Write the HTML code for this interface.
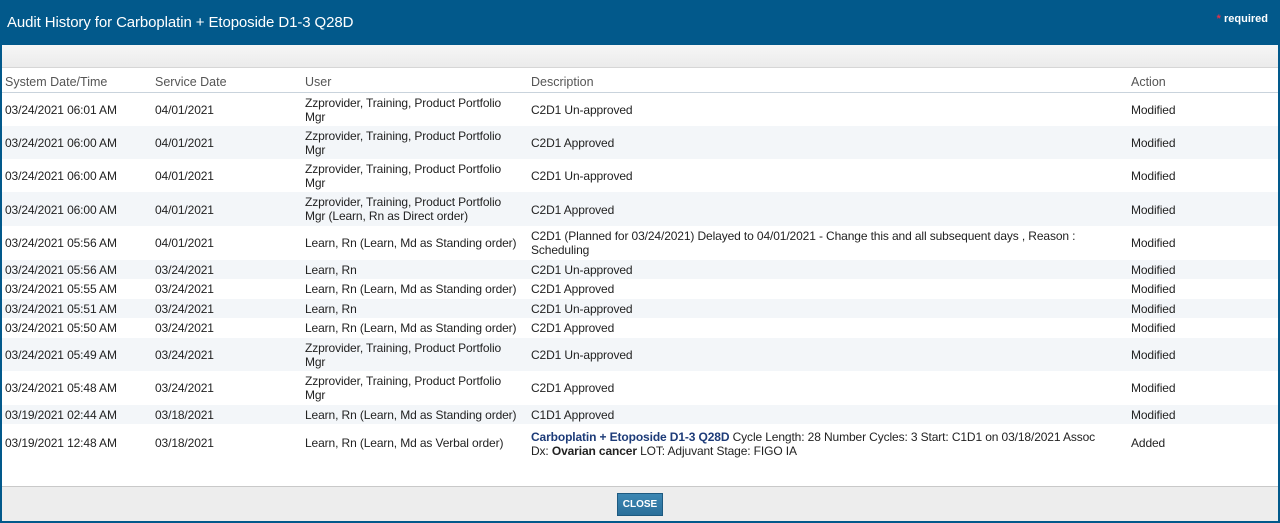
<!DOCTYPE html>
<html><head><style>
*{margin:0;padding:0;box-sizing:border-box}
body{width:1280px;height:523px;background:#fff;font-family:"Liberation Sans",Arial,sans-serif;font-size:12px;color:#222;position:relative;overflow:hidden}
.hdr{position:absolute;left:0;top:0;width:1280px;height:45px;background:#02598b;color:#fff}
.hdr .t{position:absolute;left:7px;top:14px;font-size:15px;letter-spacing:-0.1px}
.hdr .r{position:absolute;right:12px;top:13px;font-size:11px;font-weight:bold}
.hdr .r span{color:#e0304a}
.frame{position:absolute;left:0;top:45px;width:1280px;height:478px;border-left:2px solid #02598b;border-right:2px solid #02598b;border-bottom:2px solid #02598b}
.band{position:absolute;left:2px;top:45px;width:1276px;height:23px;background:linear-gradient(#f6f6f6,#ebebeb);border-bottom:1px solid #d6d6d6}
.th{position:absolute;top:69px;left:2px;width:1276px;height:24px;border-bottom:1px solid #c9d3dc;color:#555;font-size:12.5px}
.row{position:absolute;left:2px;width:1276px;letter-spacing:-0.12px}
.row.a{background:#f3f6f9}
.c{position:absolute;line-height:14px}
.foot{position:absolute;left:2px;top:486px;width:1276px;height:35px;background:#ededed;border-top:1px solid #c9c9c9}
.btn{position:absolute;left:617px;top:493px;width:46px;height:23px;background:linear-gradient(#3c87b3,#2a6f9a);border:1px solid #1e5a80;color:#fff;font-size:10px;font-weight:bold;text-align:center;line-height:21px}
b.n{color:#1d3b78}
</style></head><body>
<div class="hdr"><div class="t">Audit History for Carboplatin + Etoposide D1-3 Q28D</div><div class="r"><span>*</span> required</div></div>
<div class="band"></div>
<div class="th">
<div class="c" style="left:3px;top:6px">System Date/Time</div>
<div class="c" style="left:153px;top:6px">Service Date</div>
<div class="c" style="left:303px;top:6px">User</div>
<div class="c" style="left:529px;top:6px">Description</div>
<div class="c" style="left:1129px;top:6px">Action</div>
</div>
<div class="row" style="top:93px;height:33px"><div class="c" style="left:3px;top:10px">03/24/2021 06:01 AM</div><div class="c" style="left:153px;top:10px">04/01/2021</div><div class="c" style="left:303px;top:3px">Zzprovider, Training, Product Portfolio<br>Mgr</div><div class="c" style="left:529px;top:10px">C2D1 Un-approved</div><div class="c" style="left:1129px;top:10px">Modified</div></div>
<div class="row a" style="top:126px;height:33px"><div class="c" style="left:3px;top:10px">03/24/2021 06:00 AM</div><div class="c" style="left:153px;top:10px">04/01/2021</div><div class="c" style="left:303px;top:3px">Zzprovider, Training, Product Portfolio<br>Mgr</div><div class="c" style="left:529px;top:10px">C2D1 Approved</div><div class="c" style="left:1129px;top:10px">Modified</div></div>
<div class="row" style="top:159px;height:33px"><div class="c" style="left:3px;top:10px">03/24/2021 06:00 AM</div><div class="c" style="left:153px;top:10px">04/01/2021</div><div class="c" style="left:303px;top:3px">Zzprovider, Training, Product Portfolio<br>Mgr</div><div class="c" style="left:529px;top:10px">C2D1 Un-approved</div><div class="c" style="left:1129px;top:10px">Modified</div></div>
<div class="row a" style="top:192px;height:34px"><div class="c" style="left:3px;top:11px">03/24/2021 06:00 AM</div><div class="c" style="left:153px;top:11px">04/01/2021</div><div class="c" style="left:303px;top:3px">Zzprovider, Training, Product Portfolio<br>Mgr (Learn, Rn as Direct order)</div><div class="c" style="left:529px;top:11px">C2D1 Approved</div><div class="c" style="left:1129px;top:11px">Modified</div></div>
<div class="row" style="top:226px;height:34px"><div class="c" style="left:3px;top:10px">03/24/2021 05:56 AM</div><div class="c" style="left:153px;top:10px">04/01/2021</div><div class="c" style="left:303px;top:10px">Learn, Rn (Learn, Md as Standing order)</div><div class="c" style="left:529px;top:3px">C2D1 (Planned for 03/24/2021) Delayed to 04/01/2021 - Change this and all subsequent days , Reason :<br>Scheduling</div><div class="c" style="left:1129px;top:10px">Modified</div></div>
<div class="row a" style="top:260px;height:19px"><div class="c" style="left:3px;top:3px">03/24/2021 05:56 AM</div><div class="c" style="left:153px;top:3px">03/24/2021</div><div class="c" style="left:303px;top:3px">Learn, Rn</div><div class="c" style="left:529px;top:3px">C2D1 Un-approved</div><div class="c" style="left:1129px;top:3px">Modified</div></div>
<div class="row" style="top:279px;height:20px"><div class="c" style="left:3px;top:3px">03/24/2021 05:55 AM</div><div class="c" style="left:153px;top:3px">03/24/2021</div><div class="c" style="left:303px;top:3px">Learn, Rn (Learn, Md as Standing order)</div><div class="c" style="left:529px;top:3px">C2D1 Approved</div><div class="c" style="left:1129px;top:3px">Modified</div></div>
<div class="row a" style="top:299px;height:19px"><div class="c" style="left:3px;top:3px">03/24/2021 05:51 AM</div><div class="c" style="left:153px;top:3px">03/24/2021</div><div class="c" style="left:303px;top:3px">Learn, Rn</div><div class="c" style="left:529px;top:3px">C2D1 Un-approved</div><div class="c" style="left:1129px;top:3px">Modified</div></div>
<div class="row" style="top:318px;height:20px"><div class="c" style="left:3px;top:3px">03/24/2021 05:50 AM</div><div class="c" style="left:153px;top:3px">03/24/2021</div><div class="c" style="left:303px;top:3px">Learn, Rn (Learn, Md as Standing order)</div><div class="c" style="left:529px;top:3px">C2D1 Approved</div><div class="c" style="left:1129px;top:3px">Modified</div></div>
<div class="row a" style="top:338px;height:33px"><div class="c" style="left:3px;top:10px">03/24/2021 05:49 AM</div><div class="c" style="left:153px;top:10px">03/24/2021</div><div class="c" style="left:303px;top:3px">Zzprovider, Training, Product Portfolio<br>Mgr</div><div class="c" style="left:529px;top:10px">C2D1 Un-approved</div><div class="c" style="left:1129px;top:10px">Modified</div></div>
<div class="row" style="top:371px;height:34px"><div class="c" style="left:3px;top:10px">03/24/2021 05:48 AM</div><div class="c" style="left:153px;top:10px">03/24/2021</div><div class="c" style="left:303px;top:3px">Zzprovider, Training, Product Portfolio<br>Mgr</div><div class="c" style="left:529px;top:10px">C2D1 Approved</div><div class="c" style="left:1129px;top:10px">Modified</div></div>
<div class="row a" style="top:405px;height:19px"><div class="c" style="left:3px;top:3px">03/19/2021 02:44 AM</div><div class="c" style="left:153px;top:3px">03/18/2021</div><div class="c" style="left:303px;top:3px">Learn, Rn (Learn, Md as Standing order)</div><div class="c" style="left:529px;top:3px">C1D1 Approved</div><div class="c" style="left:1129px;top:3px">Modified</div></div>
<div class="row" style="top:424px;height:62px"><div class="c" style="left:3px;top:12px">03/19/2021 12:48 AM</div><div class="c" style="left:153px;top:12px">03/18/2021</div><div class="c" style="left:303px;top:12px">Learn, Rn (Learn, Md as Verbal order)</div><div class="c" style="left:529px;top:6px;width:600px"><b class="n">Carboplatin + Etoposide D1-3 Q28D</b> Cycle Length: 28 Number Cycles: 3 Start: C1D1 on 03/18/2021 Assoc<br>Dx: <b>Ovarian cancer</b> LOT: Adjuvant Stage: FIGO IA</div><div class="c" style="left:1129px;top:12px">Added</div></div>
<div class="foot"></div>
<div class="btn">CLOSE</div>
<div class="frame"></div>
</body></html>
